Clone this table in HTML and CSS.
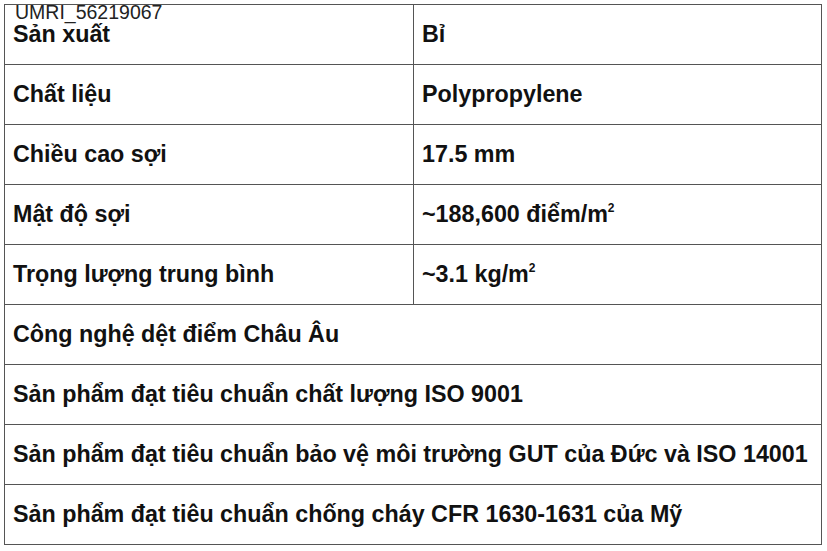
FILE: index.html
```html
<!DOCTYPE html>
<html lang="vi">
<head>
<meta charset="utf-8">
<link rel="stylesheet" href="styles.css">
</head>
<body>
<div class="page">
  <table class="spec">
    <tr><td class="k">Sản xuất</td><td class="v">Bỉ</td></tr>
    <tr><td class="k">Chất liệu</td><td class="v">Polypropylene</td></tr>
    <tr><td class="k">Chiều cao sợi</td><td class="v">17.5 mm</td></tr>
    <tr><td class="k">Mật độ sợi</td><td class="v">~188,600 điểm/m<sup>2</sup></td></tr>
    <tr><td class="k">Trọng lượng trung bình</td><td class="v">~3.1 kg/m<sup>2</sup></td></tr>
    <tr><td colspan="2">Công nghệ dệt điểm Châu Âu</td></tr>
    <tr><td colspan="2">Sản phẩm đạt tiêu chuẩn chất lượng ISO 9001</td></tr>
    <tr><td colspan="2">Sản phẩm đạt tiêu chuẩn bảo vệ môi trường GUT của Đức và ISO 14001</td></tr>
    <tr><td colspan="2">Sản phẩm đạt tiêu chuẩn chống cháy CFR 1630-1631 của Mỹ</td></tr>
  </table>
  <div class="code">UMRI_56219067</div>
</div>
</body>
</html>
```
FILE: styles.css
```css
html, body {
  margin: 0;
  padding: 0;
  background: #fff;
}
.page {
  position: relative;
  padding: 4px 0 0 4px;
  font-family: "Liberation Sans", Arial, sans-serif;
  color: #111;
}
.spec {
  border-collapse: collapse;
  width: 818px;
  table-layout: fixed;
}
.spec td {
  border: 1px solid #555;
  height: 60px;
  padding: 0 8px;
  font-size: 23.3px;
  font-weight: bold;
  vertical-align: middle;
  white-space: nowrap;
  box-sizing: border-box;
}
.spec td.k {
  width: 409px;
}
.spec sup {
  font-size: 12px;
  vertical-align: 10px;
  line-height: 0;
}
.code {
  position: absolute;
  left: 15px;
  top: 3px;
  font-size: 19.5px;
  color: #222;
  line-height: 1;
}
```
